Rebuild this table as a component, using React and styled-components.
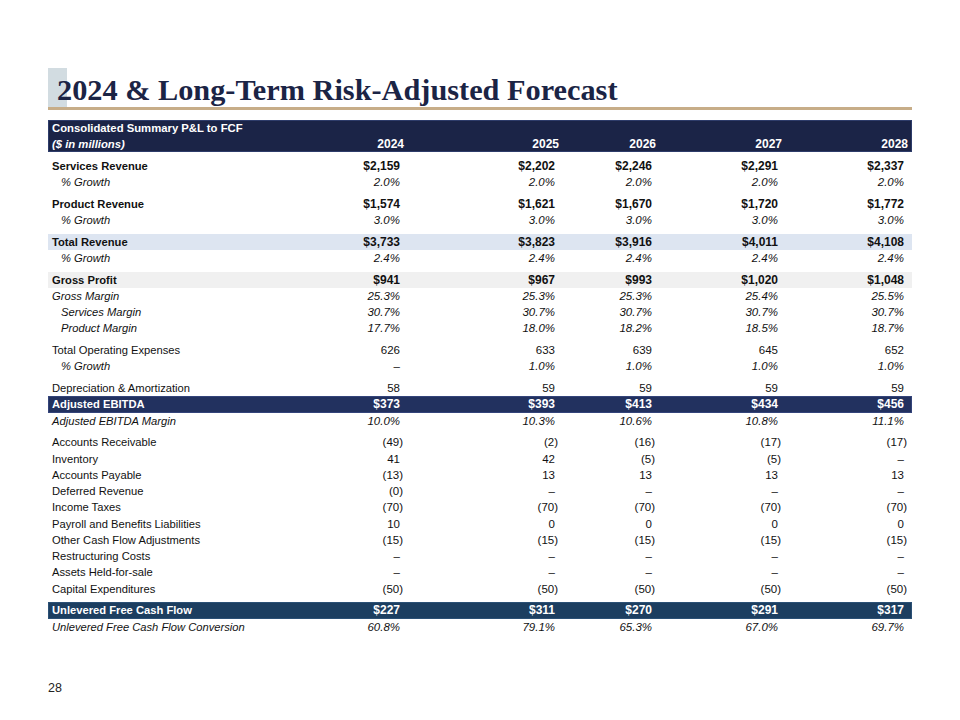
import React from 'react';
import styled, { createGlobalStyle, css } from 'styled-components';

const GlobalStyle = createGlobalStyle`
  html, body { margin: 0; padding: 0; background: #fff; }
  body { font-family: "Liberation Sans", Arial, sans-serif; color: #111; }
`;

const COLS = '212px 148px 155px 97px 126px 126px';

const Page = styled.div`
  width: 960px;
  min-height: 720px;
  box-sizing: border-box;
  padding: 68px 48px 25px;
  display: flex;
  flex-direction: column;
`;

const TitleBar = styled.div`
  position: relative;
  height: 39px;
  border-bottom: 3px solid #c7ad88;
  padding-left: 9px;
  display: flex;
  align-items: flex-end;
  &::before {
    content: '';
    position: absolute;
    left: 0;
    top: 0;
    width: 19px;
    height: 100%;
    background: #d2dce1;
  }
`;

const Title = styled.h1`
  position: relative;
  margin: 0;
  padding-bottom: 2px;
  font-family: "Liberation Serif", "Times New Roman", serif;
  font-weight: 700;
  font-size: 30.3px;
  line-height: 1;
  color: #1b2445;
  white-space: nowrap;
`;

const Table = styled.div`
  margin-top: 10px;
  display: flex;
  flex-direction: column;
`;

const Header = styled.div`
  display: grid;
  grid-template-columns: ${COLS};
  grid-template-rows: 16px 16px;
  height: 32px;
  align-items: center;
  background: #1b2447;
  box-shadow: inset 0 0 0 1px #2e3c6a;
  color: #fff;
  font-weight: 700;
  margin-bottom: 5.5px;
`;

const HeaderTitle = styled.div`
  grid-column: 1 / -1;
  padding-left: 4px;
  font-size: 11.3px;
  white-space: nowrap;
`;

const HeaderSub = styled.div`
  padding-left: 4px;
  font-size: 11.3px;
  font-style: italic;
  white-space: nowrap;
`;

const Year = styled.div`
  text-align: right;
  padding-right: 4px;
  font-size: 12px;
`;

const bands = {
  blue: css`background: #dde5f1;`,
  gray: css`background: #f0f0f0;`,
  navy: css`
    background: #22315f;
    box-shadow: inset 0 0 0 1px #34447a;
    color: #fff;
  `,
  teal: css`
    background: #1c3e60;
    box-shadow: inset 0 0 0 1px #2b5075;
    color: #fff;
  `,
};

const Row = styled.div`
  display: grid;
  grid-template-columns: ${COLS};
  height: 16.25px;
  align-items: center;
  color: #111;
  ${(p) => (p.$band ? bands[p.$band] : '')}
`;

const Spacer = styled.div`
  height: 5.5px;
`;

const Label = styled.div`
  padding-left: ${(p) => (p.$indent ? 13 : 4)}px;
  font-size: 11.2px;
  white-space: nowrap;
  font-weight: ${(p) => (p.$kind === 'bold' ? 700 : 400)};
  font-style: ${(p) => (p.$kind === 'italic' ? 'italic' : 'normal')};
`;

const Value = styled.div`
  text-align: right;
  padding-right: ${(p) => (p.$paren ? 5 : 8)}px;
  font-size: ${(p) => (p.$kind === 'bold' ? 12 : 11.5)}px;
  font-weight: ${(p) => (p.$kind === 'bold' ? 700 : 400)};
  font-style: ${(p) => (p.$kind === 'italic' ? 'italic' : 'normal')};
  white-space: nowrap;
`;

const Footer = styled.div`
  margin-top: auto;
  font-size: 12.5px;
  line-height: 14px;
  color: #222;
`;

const years = ['2024', '2025', '2026', '2027', '2028'];
const D = '–';

const rows = [
  { label: 'Services Revenue', kind: 'bold', vals: ['$2,159', '$2,202', '$2,246', '$2,291', '$2,337'] },
  { label: '% Growth', kind: 'italic', indent: true, gap: true, vals: ['2.0%', '2.0%', '2.0%', '2.0%', '2.0%'] },
  { label: 'Product Revenue', kind: 'bold', vals: ['$1,574', '$1,621', '$1,670', '$1,720', '$1,772'] },
  { label: '% Growth', kind: 'italic', indent: true, gap: true, vals: ['3.0%', '3.0%', '3.0%', '3.0%', '3.0%'] },
  { label: 'Total Revenue', kind: 'bold', band: 'blue', vals: ['$3,733', '$3,823', '$3,916', '$4,011', '$4,108'] },
  { label: '% Growth', kind: 'italic', indent: true, gap: true, vals: ['2.4%', '2.4%', '2.4%', '2.4%', '2.4%'] },
  { label: 'Gross Profit', kind: 'bold', band: 'gray', vals: ['$941', '$967', '$993', '$1,020', '$1,048'] },
  { label: 'Gross Margin', kind: 'italic', vals: ['25.3%', '25.3%', '25.3%', '25.4%', '25.5%'] },
  { label: 'Services Margin', kind: 'italic', indent: true, vals: ['30.7%', '30.7%', '30.7%', '30.7%', '30.7%'] },
  { label: 'Product Margin', kind: 'italic', indent: true, gap: true, vals: ['17.7%', '18.0%', '18.2%', '18.5%', '18.7%'] },
  { label: 'Total Operating Expenses', kind: 'plain', vals: ['626', '633', '639', '645', '652'] },
  { label: '% Growth', kind: 'italic', indent: true, gap: true, vals: [D, '1.0%', '1.0%', '1.0%', '1.0%'] },
  { label: 'Depreciation & Amortization', kind: 'plain', vals: ['58', '59', '59', '59', '59'] },
  { label: 'Adjusted EBITDA', kind: 'bold', band: 'navy', vals: ['$373', '$393', '$413', '$434', '$456'] },
  { label: 'Adjusted EBITDA Margin', kind: 'italic', gap: true, vals: ['10.0%', '10.3%', '10.6%', '10.8%', '11.1%'] },
  { label: 'Accounts Receivable', kind: 'plain', vals: ['(49)', '(2)', '(16)', '(17)', '(17)'] },
  { label: 'Inventory', kind: 'plain', vals: ['41', '42', '(5)', '(5)', D] },
  { label: 'Accounts Payable', kind: 'plain', vals: ['(13)', '13', '13', '13', '13'] },
  { label: 'Deferred Revenue', kind: 'plain', vals: ['(0)', D, D, D, D] },
  { label: 'Income Taxes', kind: 'plain', vals: ['(70)', '(70)', '(70)', '(70)', '(70)'] },
  { label: 'Payroll and Benefits Liabilities', kind: 'plain', vals: ['10', '0', '0', '0', '0'] },
  { label: 'Other Cash Flow Adjustments', kind: 'plain', vals: ['(15)', '(15)', '(15)', '(15)', '(15)'] },
  { label: 'Restructuring Costs', kind: 'plain', vals: [D, D, D, D, D] },
  { label: 'Assets Held-for-sale', kind: 'plain', vals: [D, D, D, D, D] },
  { label: 'Capital Expenditures', kind: 'plain', gap: true, vals: ['(50)', '(50)', '(50)', '(50)', '(50)'] },
  { label: 'Unlevered Free Cash Flow', kind: 'bold', band: 'teal', vals: ['$227', '$311', '$270', '$291', '$317'] },
  { label: 'Unlevered Free Cash Flow Conversion', kind: 'italic', vals: ['60.8%', '79.1%', '65.3%', '67.0%', '69.7%'] },
];

export default function App() {
  return (
    <>
      <GlobalStyle />
      <Page>
        <TitleBar>
          <Title>2024 &amp; Long-Term Risk-Adjusted Forecast</Title>
        </TitleBar>
        <Table>
          <Header>
            <HeaderTitle>Consolidated Summary P&amp;L to FCF</HeaderTitle>
            <HeaderSub>($ in millions)</HeaderSub>
            {years.map((y) => (
              <Year key={y}>{y}</Year>
            ))}
          </Header>
          {rows.map((r, i) => (
            <React.Fragment key={i}>
              <Row $band={r.band}>
                <Label $kind={r.kind} $indent={r.indent}>{r.label}</Label>
                {r.vals.map((v, j) => (
                  <Value key={j} $kind={r.kind} $paren={v.startsWith('(')}>{v}</Value>
                ))}
              </Row>
              {r.gap && <Spacer />}
            </React.Fragment>
          ))}
        </Table>
        <Footer>28</Footer>
      </Page>
    </>
  );
}
